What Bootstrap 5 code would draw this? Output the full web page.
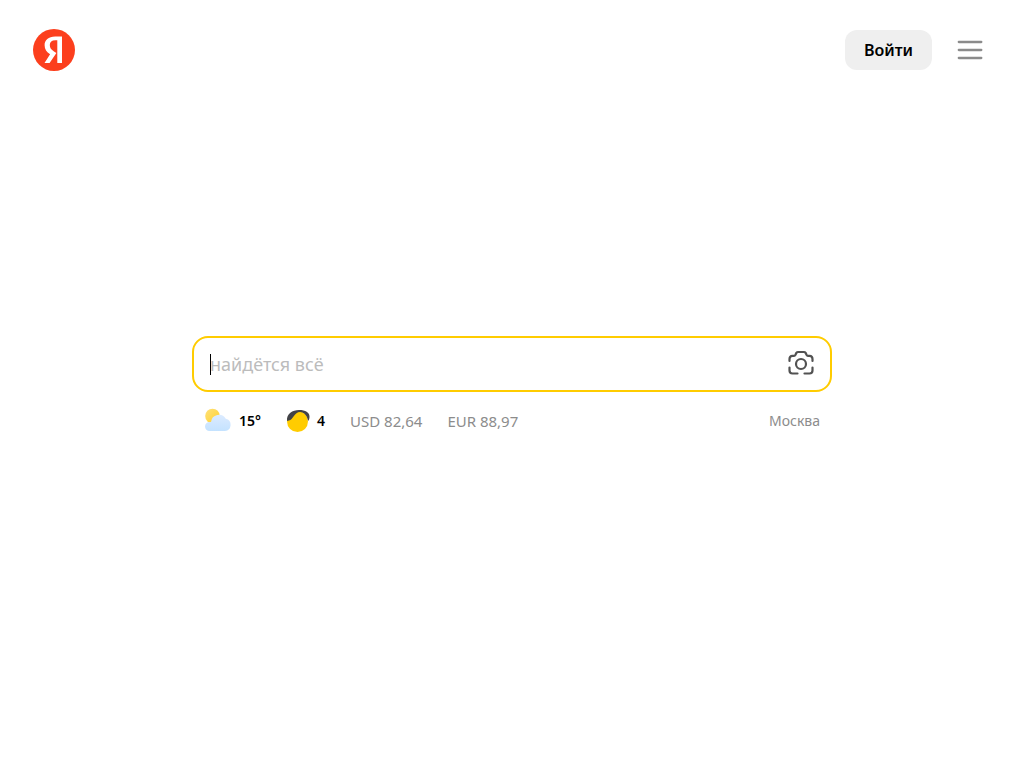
<!DOCTYPE html>
<html lang="ru">
<head>
<meta charset="utf-8">
<meta name="viewport" content="width=device-width, initial-scale=1">
<title>Яндекс</title>
<link href="https://cdn.jsdelivr.net/npm/bootstrap@5.3.0/dist/css/bootstrap.min.css" rel="stylesheet">
<style>
  body { font-family: "Noto Sans", "Open Sans", sans-serif; background: #fff; color: #000; }
  .site-header { height: 100px; padding: 0 40px 0 32px; }
  .login-btn { --bs-btn-padding-x: 19px; --bs-btn-padding-y: 8px; --bs-btn-border-width: 0; --bs-btn-border-radius: 12px;
    --bs-btn-bg: #efefef; --bs-btn-color: #000; --bs-btn-hover-bg: #e4e4e4; --bs-btn-font-size: 16px; --bs-btn-font-weight: 600; line-height: 24px;
    font-family: "Noto Sans", sans-serif; }
  .search-area { width: 100%; max-width: 640px; margin-top: calc(50vh - 148px); }
  .search-box { height: 56px; border: 2px solid #fc0; border-radius: 16px; padding: 0 16px; }
  .search-field, .search-field:focus { border: 0; box-shadow: none; background: none; padding: 0; font-size: 18px; line-height: 28px; caret-color: transparent; }
  .search-field::placeholder { color: #bcbcbc; }
  .caret-line { width: 1px; height: 21px; left: 16px; top: 16px; background: #000; }
  .informers { padding: 15px 12px 0; gap: 25px; font-size: 15px; line-height: 28px; }
  .informers a { color: #8c8c8c; text-decoration: none; white-space: nowrap; }
  .informers a.value-link { color: #000; font-weight: 600; font-size: 14px; }
  .informers a.city-link { font-size: 14px; }
</style>
</head>
<body class="min-vh-100">
<header class="site-header d-flex align-items-center justify-content-between">
  <a href="#" class="d-flex" aria-label="Яндекс">
    <svg width="44" height="44" viewBox="0 0 44 44" aria-hidden="true">
      <circle cx="22" cy="22" r="21" fill="#fc3f1d"/>
      <path fill="#fff" d="M25.300 35h4.700V8.500h-6.800c-6.800 0-10.600 3.500-10.600 8.700 0 4.100 2 6.600 5.500 9.100L12.500 35h5.100l6.800-10.100-2.400-1.500c-2.800-1.900-4.200-3.400-4.200-6.500 0-2.800 1.900-4.600 5.600-4.600h1.900z"/>
    </svg>
  </a>
  <div class="d-flex align-items-center gap-4">
    <button type="button" class="btn login-btn">Войти</button>
    <button type="button" class="btn p-0 border-0 d-flex" aria-label="Меню">
      <svg width="28" height="28" viewBox="0 0 28 28" fill="none" stroke="#8b8b8b" stroke-width="2.300" stroke-linecap="round" aria-hidden="true"><path d="M2.800 6h22.500M2.800 14h22.500M2.800 22h22.500"/></svg>
    </button>
  </div>
</header>
<main class="d-flex justify-content-center">
  <div class="search-area">
    <form class="search-box position-relative d-flex align-items-center">
      <input type="text" class="form-control search-field" placeholder="найдётся всё" aria-label="Запрос">
      <span class="caret-line position-absolute" aria-hidden="true"></span>
      <button type="button" class="btn p-0 border-0 d-flex" aria-label="Поиск по картинке">
        <svg width="28" height="28" viewBox="-1 1 28 28" fill="none" stroke="#525252" stroke-width="2.200" stroke-linecap="round" stroke-linejoin="round" aria-hidden="true">
          <circle cx="14" cy="15" r="5"/>
          <path d="M2.500 12V10q0-3 3-3.200H7q1 0 1.500-1L9.300 4q.7-1 1.800-1h5.800q1.100 0 1.800 1l.8 1.800q.5 1 1.500 1h1.500q3 .2 3 3.200V12M2.500 18.500v3q0 3 3 3H10.500M25.500 18.500v3q0 3-3 3H17.500"/>
        </svg>
      </button>
    </form>
    <nav class="informers d-flex align-items-center" aria-label="Информеры">
      <a href="#" class="value-link d-flex align-items-center gap-2" aria-label="Погода 15°">
        <svg width="27" height="26" viewBox="-1 1 27 26" aria-hidden="true">
          <defs>
            <linearGradient id="sunFill" x1="0" y1="0" x2="1" y2="1"><stop stop-color="#ffe17a"/><stop offset="1" stop-color="#ffd12e"/></linearGradient>
            <linearGradient id="cloudFill" x1="0" y1="0" x2="0" y2="1"><stop stop-color="#dcebff"/><stop offset="1" stop-color="#c4e2ff"/></linearGradient>
          </defs>
          <circle cx="7.500" cy="9" r="7.300" fill="url(#sunFill)"/>
          <path fill="url(#cloudFill)" d="M4.500 24a4.500 4.500 0 0 1 0-9h1.500a8 8 0 0 1 14.800-3.200A6.200 6.200 0 0 1 20 24z"/>
        </svg>
        <span>15°</span>
      </a>
      <a href="#" class="value-link d-flex align-items-center gap-2" aria-label="Пробки 4">
        <svg class="overflow-visible" width="23" height="24" viewBox="0 1 23 24" aria-hidden="true">
          <circle cx="11.500" cy="13.500" r="10.500" fill="#fc0"/>
          <path fill="#424247" d="M1 13C.5 5.500 6.500 2 13 2c6.500 0 10.500 2.500 10.500 6.500 0 2-.5 3.500-1.500 4.500C21.500 8 18 4 14 4 8.500 4 7 12 3 12.500c-1 .1-1.500.2-2 .5z"/>
        </svg>
        <span>4</span>
      </a>
      <a href="#">USD 82,64</a>
      <a href="#">EUR 88,97</a>
      <a href="#" class="city-link ms-auto">Москва</a>
    </nav>
  </div>
</main>
<script src="https://cdn.jsdelivr.net/npm/bootstrap@5.3.0/dist/js/bootstrap.bundle.min.js"></script>
</body>
</html>
